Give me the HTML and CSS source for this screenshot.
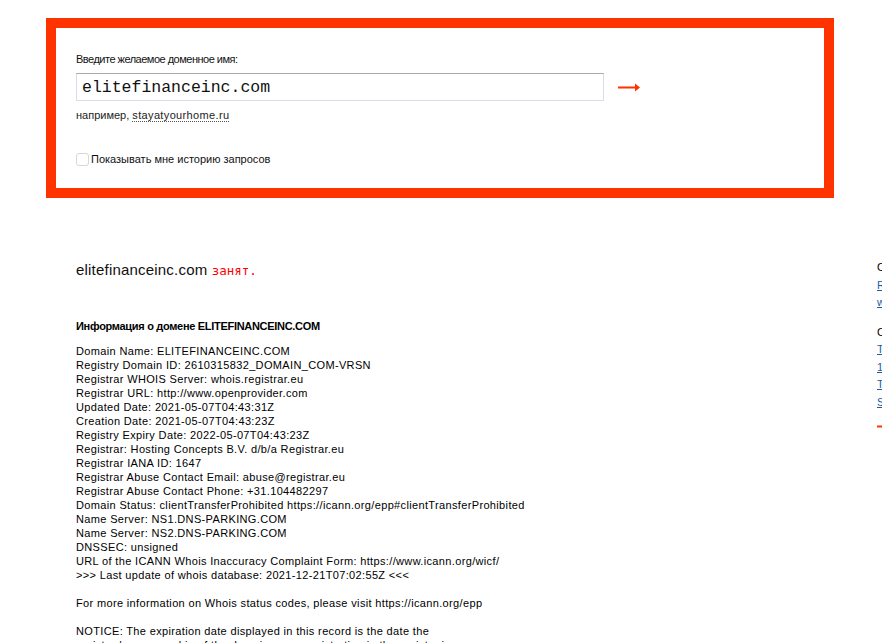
FILE: index.html
```html
<!DOCTYPE html>
<html lang="ru">
<head>
    <meta charset="UTF-8">
    <title>Whois</title>
    <link rel="stylesheet" href="styles.css">
</head>
<body>
    <div class="page">
        <div class="main">
            <form class="search-box">
                <label class="search-label" for="domain">Введите желаемое доменное имя:</label>
                <div class="search-row">
                    <input type="text" id="domain" class="search-input" value="elitefinanceinc.com">
                    <button type="submit" class="search-go" title="Проверить">
                        <svg width="22" height="9" viewBox="0 0 22 9">
                            <rect x="0" y="3.5" width="19" height="2" fill="#ff3300"/>
                            <path d="M17 0.5 L22 4.5 L17 8.5 Z" fill="#ff3300"/>
                        </svg>
                    </button>
                </div>
                <div class="search-hint">например, <a href="#" class="hint-link">stayatyourhome.ru</a></div>
                <div class="history">
                    <input type="checkbox" id="history">
                    <label for="history">Показывать мне историю запросов</label>
                </div>
            </form>

            <div class="result">
                <div class="result-title">elitefinanceinc.com <span class="busy">занят.</span></div>
                <div class="whois-head">Информация о домене ELITEFINANCEINC.COM</div>
                <div class="whois">Domain Name: ELITEFINANCEINC.COM
Registry Domain ID: 2610315832_DOMAIN_COM-VRSN
Registrar WHOIS Server: whois.registrar.eu
Registrar URL: http://www.openprovider.com
Updated Date: 2021-05-07T04:43:31Z
Creation Date: 2021-05-07T04:43:23Z
Registry Expiry Date: 2022-05-07T04:43:23Z
Registrar: Hosting Concepts B.V. d/b/a Registrar.eu
Registrar IANA ID: 1647
Registrar Abuse Contact Email: abuse@registrar.eu
Registrar Abuse Contact Phone: +31.104482297
Domain Status: clientTransferProhibited https://icann.org/epp#clientTransferProhibited
Name Server: NS1.DNS-PARKING.COM
Name Server: NS2.DNS-PARKING.COM
DNSSEC: unsigned
URL of the ICANN Whois Inaccuracy Complaint Form: https://www.icann.org/wicf/
&gt;&gt;&gt; Last update of whois database: 2021-12-21T07:02:55Z &lt;&lt;&lt;

For more information on Whois status codes, please visit https://icann.org/epp

NOTICE: The expiration date displayed in this record is the date the
registrar's sponsorship of the domain name registration in the registry is
currently set to expire.</div>
            </div>
        </div>

        <div class="sidebar">
            <div class="side-title">Смотрите также</div>
            <a href="#" class="side-link">Registrar.eu</a>
            <a href="#" class="side-link">whois.registrar.eu</a>
            <div class="side-title second">Сервисы</div>
            <a href="#" class="side-link">Тарифы на домены</a>
            <a href="#" class="side-link">1 год регистрации</a>
            <a href="#" class="side-link">Трансфер домена</a>
            <a href="#" class="side-link">SSL-сертификаты</a>
            <div class="side-more">
                <svg width="16" height="9" viewBox="0 0 16 9">
                    <rect x="0" y="3.5" width="13" height="2" fill="#ff3300"/>
                    <path d="M11 0.5 L16 4.5 L11 8.5 Z" fill="#ff3300"/>
                </svg>
                <span>все сервисы</span>
            </div>
        </div>
    </div>
</body>
</html>
```

FILE: styles.css
```css
html, body {
    overflow: hidden;
}
body {
    margin: 0;
    background: #fff;
    color: #000;
    font-family: 'Liberation Sans', Arial, sans-serif;
    font-size: 11px;
}
.page {
    display: flex;
    align-items: flex-start;
    padding: 18px 0 0 46px;
}
.main {
    width: 788px;
    flex-shrink: 0;
}
.search-box {
    display: flex;
    flex-direction: column;
    align-items: flex-start;
    margin: 0;
    border: 10px solid #ff3300;
    padding: 25px 20px 22px 20px;
}
.search-label {
    line-height: 13px;
    letter-spacing: -0.5px;
    color: #111;
}
.search-row {
    display: flex;
    align-items: center;
    gap: 14px;
    margin-top: 7px;
}
.search-input {
    box-sizing: border-box;
    width: 528px;
    height: 28px;
    margin: 0;
    padding: 1px 5px 0 5px;
    border: 1px solid #dcdce8;
    border-top-color: #a9a9a9;
    font-family: 'Liberation Mono', 'Courier New', monospace;
    font-size: 16.5px;
    color: #111;
    outline: none;
}
.search-go {
    display: flex;
    background: none;
    border: none;
    padding: 0;
    cursor: pointer;
}
.search-hint {
    margin-top: 8px;
    line-height: 13px;
    color: #222;
}
.hint-link {
    color: #222;
    text-decoration: none;
    letter-spacing: 0.35px;
    border-bottom: 1px dotted #555;
}
.history {
    display: flex;
    align-items: center;
    margin-top: 30px;
}
.history input {
    appearance: none;
    box-sizing: border-box;
    width: 13px;
    height: 13px;
    margin: 0 2px 0 0;
    border: 1px solid #d6d6e0;
    border-radius: 3px;
    background: #fff;
}
.history input:checked {
    background: #ff3300;
    border-color: #ff3300;
}
.history label {
    line-height: 14px;
    color: #111;
}
.result {
    padding: 63px 0 0 30px;
}
.result-title {
    font-size: 15px;
    line-height: 18px;
    letter-spacing: 0.2px;
    color: #111;
}
.busy {
    color: #ff0000;
    font-family: 'DejaVu Sans Mono', monospace;
    font-size: 12.5px;
    letter-spacing: 0;
}
.whois-head {
    margin-top: 39px;
    font-weight: bold;
    line-height: 14px;
    letter-spacing: -0.3px;
}
.whois {
    margin-top: 11px;
    white-space: pre-line;
    line-height: 14px;
    letter-spacing: 0.35px;
}
.sidebar {
    display: flex;
    flex-direction: column;
    align-items: flex-start;
    flex-shrink: 0;
    width: 220px;
    margin: 241px 0 0 43px;
    line-height: 17.5px;
}
.side-title {
    color: #000;
}
.side-title.second {
    margin-top: 12px;
}
.side-link {
    color: #1a5e9e;
}
.side-more {
    display: flex;
    align-items: center;
    gap: 4px;
    margin-top: 7px;
    color: #ff3300;
}
```
